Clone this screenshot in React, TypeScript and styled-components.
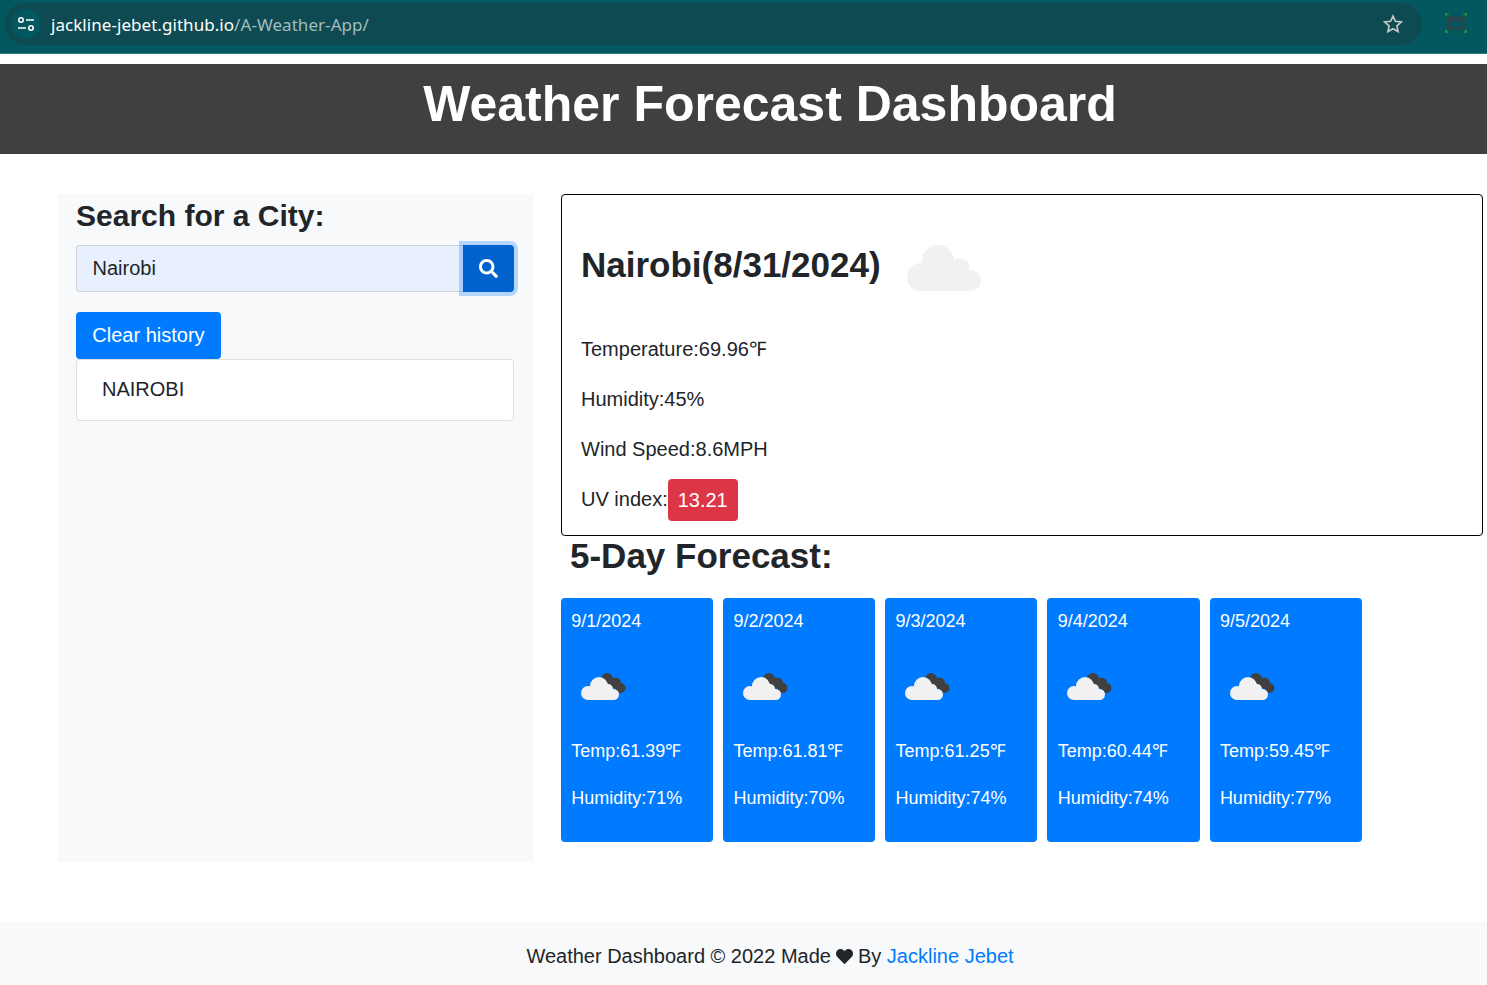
import React from "react";
import styled, { createGlobalStyle } from "styled-components";
import { FaHeart, FaSearch } from "react-icons/fa";

const GlobalStyle = createGlobalStyle`
  html, body {
    margin: 0;
    padding: 0;
    background: #fff;
    color: #212529;
    font-family: "Liberation Sans", Arial, sans-serif;
    font-size: 20px;
  }
  * { box-sizing: border-box; }
`;

const BrowserBar = styled.div`
  height: 54px;
  background: #03575e;
  border-bottom: 1px solid #2a7a80;
  display: flex;
  align-items: flex-start;
  padding: 3px 0 0 5px;
`;

const AddressBar = styled.div`
  width: 1417px;
  height: 42px;
  background: #0e4a52;
  border-radius: 21px;
  display: flex;
  align-items: center;
  padding: 0 19px 0 6px;
`;

const SiteInfo = styled.div`
  width: 30px;
  height: 30px;
  border-radius: 50%;
  background: #03575e;
  display: flex;
  align-items: center;
  justify-content: center;
  margin-right: 10px;
`;

const Url = styled.div`
  flex: 1;
  font-family: "Noto Sans", sans-serif;
  font-size: 17px;
  color: #fff;
  letter-spacing: 0.05px;
`;

const UrlPath = styled.span`
  color: #a3bcbf;
`;

const Extension = styled.div`
  margin-left: 23px;
  margin-top: 10px;
  display: flex;
`;

const Header = styled.header`
  margin-top: 10px;
  height: 90px;
  background: #404040;
  color: #fff;
  display: flex;
  align-items: center;
  justify-content: center;
  padding: 0 0 11px 53px;
`;

const Title = styled.h1`
  margin: 0;
  font-size: 50px;
  font-weight: 700;
  line-height: 1.2;
`;

const Main = styled.main`
  display: flex;
  align-items: flex-start;
  gap: 28px;
  padding: 40px 4px 0 58px;
`;

const Sidebar = styled.aside`
  width: 475px;
  height: 668px;
  flex-shrink: 0;
  background: #f8f9fa;
  padding: 4px 19px 0 18px;
`;

const SideHeading = styled.h3`
  margin: 0 0 11px;
  font-size: 30px;
  font-weight: 700;
  line-height: 36px;
`;

const SearchRow = styled.div`
  display: flex;
  height: 47px;
  margin-bottom: 20px;
`;

const SearchInput = styled.div`
  flex: 1;
  background: #e8f0fe;
  border: 1px solid #ced4da;
  border-right: none;
  border-radius: 4px 0 0 4px;
  padding: 0 15.5px;
  display: flex;
  align-items: center;
  color: #212529;
`;

const SearchButton = styled.button`
  width: 51px;
  height: 47px;
  border: none;
  padding: 0;
  background: #0062cc;
  color: #fff;
  border-radius: 0 4px 4px 0;
  box-shadow: 0 0 0 4px rgba(0, 123, 255, 0.27);
  display: flex;
  align-items: center;
  justify-content: center;
`;

const ClearButton = styled.button`
  display: block;
  height: 47px;
  width: 145px;
  border: none;
  border-radius: 4px;
  background: #007bff;
  color: #fff;
  padding: 0;
  font: inherit;
`;

const HistoryItem = styled.div`
  height: 62px;
  background: #fff;
  border: 1px solid rgba(0, 0, 0, 0.125);
  border-radius: 4px;
  padding: 0 25px 2px;
  display: flex;
  align-items: center;
`;

const Content = styled.section`
  flex: 1;
  min-width: 0;
`;

const CurrentCard = styled.div`
  height: 342px;
  border: 1px solid #000;
  border-radius: 4px;
  padding: 30px 19px 0;
`;

const CityRow = styled.div`
  display: flex;
  align-items: center;
  gap: 26px;
  height: 80px;
  margin-bottom: 29px;
`;

const CityName = styled.h2`
  margin: 0;
  font-size: 35px;
  font-weight: 700;
  line-height: 42px;
`;

const CloudSlot = styled.div`
  display: flex;
  padding-top: 6px;
`;

const Stat = styled.p`
  margin: 0;
  height: 50px;
  line-height: 30px;
`;

const UvRow = styled.div`
  display: flex;
  align-items: center;
  height: 42px;
  margin-top: -5px;
`;

const UvLabel = styled.span`
  padding-bottom: 2px;
`;

const UvBadge = styled.span`
  background: #dc3545;
  color: #fff;
  border-radius: 4px;
  height: 42px;
  width: 70px;
  display: flex;
  align-items: center;
  justify-content: center;
`;

const ForecastHeading = styled.h2`
  margin: 0;
  padding-left: 9px;
  height: 62px;
  font-size: 35px;
  font-weight: 700;
  line-height: 40px;
`;

const CardRow = styled.div`
  display: flex;
  gap: 10px;
  width: 800.75px;
`;

const DayCard = styled.div`
  flex: 1;
  height: 244px;
  background: #007bff;
  color: #fff;
  border-radius: 4px;
  padding: 12px 10.25px 0;
  font-size: 18px;
  line-height: 22px;
`;

const DayDate = styled.div`
  height: 30px;
`;

const DayIcon = styled.div`
  height: 100px;
  padding: 33px 0 0 9.75px;
`;

const DayLine = styled.div`
  height: 47px;
`;

const Footer = styled.footer`
  margin-top: 60px;
  height: 63px;
  background: #f8f9fa;
  display: flex;
  align-items: center;
  justify-content: center;
  padding: 6px 0 0 53px;
  white-space: pre;
`;

const HeartIcon = styled(FaHeart)`
  width: 17px;
  height: 17px;
  margin: 0 5px;
  color: #212529;
`;

const AuthorLink = styled.a`
  color: #007bff;
  text-decoration: none;
`;

const LargeCloud = () => (
  <svg width="74" height="46" viewBox="0 0 74 46" fill="#f1f1f1" aria-hidden="true">
    <circle cx="14" cy="32" r="14" />
    <circle cx="31" cy="16" r="16" />
    <circle cx="53" cy="23" r="9.500" />
    <circle cx="63.500" cy="35.500" r="10.500" />
    <rect x="14" y="26" width="49.500" height="20" />
  </svg>
);

const SmallCloud = () => (
  <svg width="45" height="27" viewBox="0 0 45 27" aria-hidden="true">
    <g fill="#404040">
      <circle cx="26" cy="6" r="6" />
      <circle cx="34.500" cy="10" r="5.500" />
      <circle cx="39.500" cy="15" r="5" />
    </g>
    <g fill="#f1f1f1">
      <circle cx="7" cy="20" r="7" />
      <circle cx="18" cy="13" r="9" />
      <circle cx="27" cy="16" r="5" />
      <circle cx="32.500" cy="21.500" r="5.500" />
      <rect x="7" y="18" width="25.500" height="9" />
    </g>
  </svg>
);

const forecast = [
  { date: "9/1/2024", temp: "61.39", humidity: 71 },
  { date: "9/2/2024", temp: "61.81", humidity: 70 },
  { date: "9/3/2024", temp: "61.25", humidity: 74 },
  { date: "9/4/2024", temp: "60.44", humidity: 74 },
  { date: "9/5/2024", temp: "59.45", humidity: 77 },
];

export default function App() {
  return (
    <>
      <GlobalStyle />
      <BrowserBar>
        <AddressBar>
          <SiteInfo>
            <svg width="18" height="16" viewBox="0 0 18 16" fill="none" stroke="#fff" strokeWidth="1.6" aria-hidden="true">
              <circle cx="4" cy="4" r="2.2" />
              <path d="M9 4h8M1 12h8" />
              <circle cx="14" cy="12" r="2.2" />
            </svg>
          </SiteInfo>
          <Url>
            jackline-jebet.github.io<UrlPath>/A-Weather-App/</UrlPath>
          </Url>
          <svg width="20" height="20" viewBox="0 0 24 24" fill="none" stroke="#c4c7c5" strokeWidth="2" aria-hidden="true">
            <path d="M12 2.500l2.900 6.300 6.900.8-5.100 4.700 1.400 6.800-6.100-3.400-6.100 3.400 1.400-6.800-5.100-4.700 6.900-.8z" />
          </svg>
        </AddressBar>
        <Extension>
          <svg width="22" height="20" viewBox="0 0 22 20" fill="none" aria-hidden="true">
            <rect x="3.500" y="4.500" width="15" height="11" stroke="#3c4043" strokeWidth="1.800" />
            <path d="M3.500 7.500h15" stroke="#3c4043" strokeWidth="1.500" />
            <path d="M1 3.500V1h2.500M18.500 1H21v2.500M1 16.500V19h2.500M18.500 19H21v-2.500" stroke="#1e8e3e" strokeWidth="1.800" />
          </svg>
        </Extension>
      </BrowserBar>

      <Header>
        <Title>Weather Forecast Dashboard</Title>
      </Header>

      <Main>
        <Sidebar>
          <SideHeading>Search for a City:</SideHeading>
          <SearchRow>
            <SearchInput>Nairobi</SearchInput>
            <SearchButton aria-label="Search">
              <FaSearch size={19} />
            </SearchButton>
          </SearchRow>
          <ClearButton>Clear history</ClearButton>
          <HistoryItem>NAIROBI</HistoryItem>
        </Sidebar>

        <Content>
          <CurrentCard>
            <CityRow>
              <CityName>Nairobi(8/31/2024)</CityName>
              <CloudSlot>
                <LargeCloud />
              </CloudSlot>
            </CityRow>
            <Stat>Temperature:69.96℉</Stat>
            <Stat>Humidity:45%</Stat>
            <Stat>Wind Speed:8.6MPH</Stat>
            <UvRow>
              <UvLabel>UV index:</UvLabel>
              <UvBadge>13.21</UvBadge>
            </UvRow>
          </CurrentCard>
          <ForecastHeading>5-Day Forecast:</ForecastHeading>
          <CardRow>
            {forecast.map((day) => (
              <DayCard key={day.date}>
                <DayDate>{day.date}</DayDate>
                <DayIcon>
                  <SmallCloud />
                </DayIcon>
                <DayLine>Temp:{day.temp}℉</DayLine>
                <DayLine>Humidity:{day.humidity}%</DayLine>
              </DayCard>
            ))}
          </CardRow>
        </Content>
      </Main>

      <Footer>
        Weather Dashboard © 2022 Made
        <HeartIcon />
        By <AuthorLink href="#">Jackline Jebet</AuthorLink>
      </Footer>
    </>
  );
}
